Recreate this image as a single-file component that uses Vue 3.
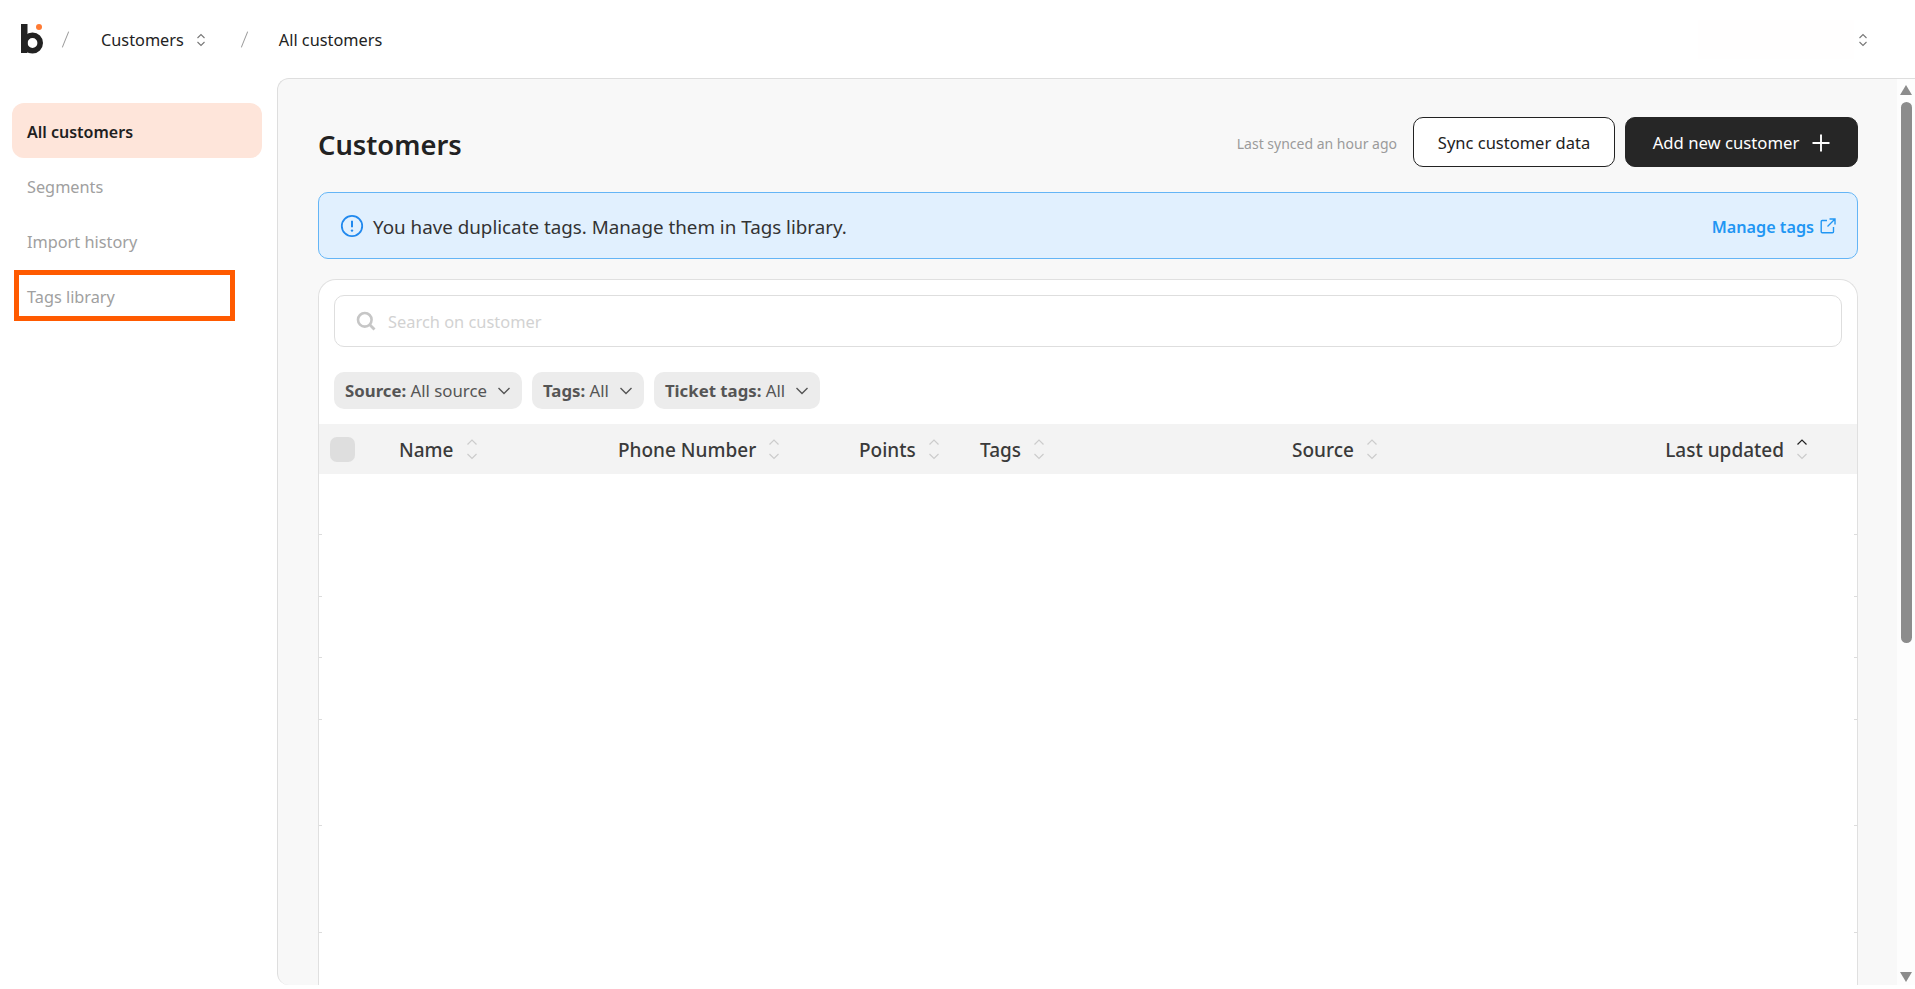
<script setup>
const navItems = [
  { label: 'All customers', active: true },
  { label: 'Segments' },
  { label: 'Import history' },
  { label: 'Tags library', marked: true },
]
const filters = [
  { key: 'Source:', value: 'All source' },
  { key: 'Tags:', value: 'All' },
  { key: 'Ticket tags:', value: 'All' },
]
const columns = [
  { label: 'Name', cls: 'c-name' },
  { label: 'Phone Number', cls: 'c-phone' },
  { label: 'Points', cls: 'c-points' },
  { label: 'Tags', cls: 'c-tags' },
  { label: 'Source', cls: 'c-source' },
  { label: 'Last updated', cls: 'c-updated', sorted: true },
]
const rowHeights = [61, 62, 61, 62, 106, 107, 80]
</script>

<template>
  <div class="app">
    <header class="topbar">
      <svg class="logo" width="24" height="32" viewBox="0 0 24 32">
        <rect x="0" y="1" width="6.5" height="29" fill="#222" />
        <circle cx="11.5" cy="20" r="7.7" fill="none" stroke="#222" stroke-width="5.6" />
        <circle cx="18" cy="4" r="3" fill="#ff7a33" />
      </svg>
      <span class="slash first"></span>
      <span class="crumb">Customers</span>
      <svg class="updown" width="10" height="14" viewBox="0 0 10 14">
        <path d="M1.5 5 5 1.5 8.5 5M1.5 9 5 12.5 8.5 9" fill="none" stroke="#777" stroke-width="1.1" />
      </svg>
      <span class="slash second"></span>
      <span class="crumb">All customers</span>
      <div class="account">
        <span class="account-box"></span>
        <svg class="updown" width="10" height="14" viewBox="0 0 10 14">
          <path d="M1.5 5 5 1.5 8.5 5M1.5 9 5 12.5 8.5 9" fill="none" stroke="#777" stroke-width="1.1" />
        </svg>
      </div>
    </header>

    <div class="body">
      <nav class="sidebar">
        <a
          v-for="item in navItems"
          :key="item.label"
          class="nav-item"
          :class="{ active: item.active }"
        >
          {{ item.label }}
          <span v-if="item.marked" class="marker"></span>
        </a>
      </nav>

      <main class="panel">
        <div class="content">
          <div class="page-head">
            <h1>Customers</h1>
            <div class="actions">
              <span class="synced">Last synced an hour ago</span>
              <button class="btn btn-light">Sync customer data</button>
              <button class="btn btn-dark">
                Add new customer
                <svg width="18" height="18" viewBox="0 0 18 18">
                  <path d="M9 0.5v17M0.5 9h17" stroke="#fff" stroke-width="1.9" fill="none" />
                </svg>
              </button>
            </div>
          </div>

          <div class="banner">
            <svg width="24" height="24" viewBox="0 0 24 24">
              <circle cx="12" cy="12" r="10.2" fill="none" stroke="#2189ee" stroke-width="1.8" />
              <path d="M12 6.8v6.4" stroke="#2189ee" stroke-width="2" fill="none" />
              <circle cx="12" cy="16.6" r="1.2" fill="#2189ee" />
            </svg>
            <span class="banner-text">You have duplicate tags. Manage them in Tags library.</span>
            <a class="manage">
              Manage tags
              <svg width="16" height="16" viewBox="0 0 16 16">
                <path d="M7 2.5H2.2a1 1 0 0 0-1 1v10.3a1 1 0 0 0 1 1h10.3a1 1 0 0 0 1-1V9M9.5 1h5.5v5.5M15 1 7.5 8.5" fill="none" stroke="#2196f3" stroke-width="1.4" />
              </svg>
            </a>
          </div>

          <section class="card">
            <div class="search">
              <svg width="20" height="20" viewBox="0 0 20 20">
                <circle cx="8.8" cy="8.8" r="6.8" fill="none" stroke="#c6c6c6" stroke-width="2.6" />
                <path d="m13.8 13.8 4.7 4.7" stroke="#c6c6c6" stroke-width="2.8" fill="none" />
              </svg>
              <span class="placeholder">Search on customer</span>
            </div>

            <div class="filters">
              <div v-for="f in filters" :key="f.key" class="chip">
                <span><b>{{ f.key }}</b> {{ f.value }}</span>
                <svg width="14" height="10" viewBox="0 0 14 10">
                  <path d="m1.5 2 5.5 5.5L12.5 2" fill="none" stroke="#555" stroke-width="1.4" />
                </svg>
              </div>
            </div>

            <div class="thead">
              <span class="check-cell"><span class="check"></span></span>
              <div v-for="col in columns" :key="col.label" class="th" :class="col.cls">
                <span class="th-label">{{ col.label }}</span>
                <svg width="12" height="24" viewBox="0 0 12 24">
                  <path d="m1.5 7.5 4.5-4.5 4.5 4.5" fill="none" :stroke="col.sorted ? '#222' : '#ccc'" stroke-width="1.2" />
                  <path d="m1.5 17 4.5 4.5 4.5-4.5" fill="none" stroke="#ccc" stroke-width="1.2" />
                </svg>
              </div>
            </div>

            <div
              v-for="(h, i) in rowHeights"
              :key="i"
              class="row"
              :style="{ height: h + 'px' }"
            >
              <i class="tick"></i>
              <i class="tick tick-right"></i>
            </div>
          </section>
        </div>

        <div class="scrollbar">
          <span class="arrow up"></span>
          <span class="thumb"></span>
          <span class="arrow down"></span>
        </div>
      </main>
    </div>
  </div>
</template>

<style>
html, body {
  margin: 0;
  overflow: hidden;
  background: #fff;
}
</style>

<style scoped>
.app {
  height: 989px;
  display: flex;
  flex-direction: column;
  font-family: "Noto Sans", "Open Sans", sans-serif;
  font-size: 16px;
  color: #222;
  background: #fff;
  overflow: hidden;
}

/* top bar */
.topbar {
  height: 78px;
  flex: none;
  display: flex;
  align-items: center;
  padding: 1px 0 0 21px;
  box-sizing: border-box;
}
.logo { flex: none; margin-top: -1px; }
.slash {
  display: block;
  width: 1px;
  height: 17px;
  background: #9a9a9a;
  transform: rotate(22deg);
}
.slash.first { margin: 0 35px 0 20px; }
.slash.second { margin: 0 34px 0 38px; }
.crumb { font-size: 16.3px; color: #222; }
.updown { flex: none; margin-left: 12px; }
.account {
  margin-left: auto;
  display: flex;
  align-items: center;
  padding-right: 47px;
}
.account-box {
  width: 156px;
  height: 39px;
  background: #fffefe;
}
.account .updown { margin-left: 4px; }

/* sidebar */
.body {
  flex: 1;
  min-height: 0;
  display: flex;
  padding-bottom: 4px;
}
.sidebar {
  width: 277px;
  flex: none;
  box-sizing: border-box;
  padding: 25px 15px 0 12px;
}
.nav-item {
  position: relative;
  display: flex;
  align-items: center;
  height: 55px;
  box-sizing: border-box;
  padding: 2px 0 0 15px;
  border-radius: 12px;
  color: #a0a0a0;
  font-size: 16.3px;
}
.nav-item.active {
  background: #fee5da;
  color: #1f1f1f;
  font-weight: 600;
  font-size: 16px;
}
.marker {
  position: absolute;
  left: 2px;
  top: 2px;
  width: 221px;
  height: 51px;
  box-sizing: border-box;
  border: 5px solid #ff5a00;
}

/* main panel */
.panel {
  flex: 1;
  min-width: 0;
  display: flex;
  background: #f8f8f8;
  border-top: 1px solid #dedede;
  border-left: 1px solid #dedede;
  border-top-left-radius: 12px;
  border-bottom-left-radius: 12px;
  overflow: hidden;
}
.content {
  flex: 1;
  min-width: 0;
  box-sizing: border-box;
  padding: 38px 39px 0 40px;
}
.page-head {
  display: flex;
  align-items: center;
  justify-content: space-between;
  height: 50px;
  margin-bottom: 25px;
}
h1 {
  margin: 4px 0 0;
  font-size: 27.3px;
  font-weight: 600;
  color: #222;
}
.actions {
  display: flex;
  align-items: center;
}
.synced {
  font-size: 14px;
  color: #9b9b9b;
  margin-right: 16px;
  padding-top: 2px;
}
.btn {
  height: 50px;
  box-sizing: border-box;
  font: inherit;
  font-size: 16.5px;
  padding: 1px 0 0;
  border-radius: 10px;
  display: flex;
  align-items: center;
  justify-content: center;
}
.btn-light {
  width: 202px;
  background: #fff;
  border: 1px solid #222;
  color: #222;
  margin-right: 10px;
}
.btn-dark {
  width: 233px;
  background: #262626;
  border: 1px solid #262626;
  color: #fff;
  font-size: 16.7px;
  gap: 13px;
}

.banner {
  height: 67px;
  box-sizing: border-box;
  display: flex;
  align-items: center;
  background: #e1f0fe;
  border: 1px solid #64b5f6;
  border-radius: 10px;
  padding: 0 21px;
  margin-bottom: 20px;
}
.banner-text {
  margin-left: 9px;
  padding-top: 2px;
  font-size: 18.8px;
  color: #333;
}
.manage {
  margin-left: auto;
  display: flex;
  align-items: center;
  gap: 6px;
  padding-top: 2px;
  color: #2196f3;
  font-weight: 600;
  font-size: 16.2px;
}
.manage svg { margin-top: -2px; }

/* card */
.card {
  background: #fff;
  border: 1px solid #e0e0e0;
  border-bottom: 0;
  border-radius: 18px 18px 0 0;
}
.search {
  margin: 15px 15px 25px;
  height: 52px;
  box-sizing: border-box;
  display: flex;
  align-items: center;
  gap: 12px;
  padding-left: 21px;
  border: 1px solid #dedede;
  border-radius: 10px;
}
.placeholder {
  color: #d2d2d2;
  font-size: 16.4px;
  padding-top: 1px;
}
.filters {
  display: flex;
  gap: 10px;
  margin: 0 15px 15px;
}
.chip {
  height: 37px;
  display: flex;
  align-items: center;
  gap: 10px;
  padding: 0 11px;
  border-radius: 10px;
  background: #ececec;
  font-size: 16.8px;
  color: #555;
}
.chip b { font-weight: 700; }

.thead {
  height: 50px;
  display: grid;
  grid-template-columns: 80px 219px 241px 121px 312px 1fr auto;
  align-items: center;
  background: #f3f3f3;
}
.check-cell { padding-left: 11px; display: flex; }
.check {
  width: 25px;
  height: 25px;
  border-radius: 7px;
  background: #dedede;
}
.th {
  display: flex;
  align-items: center;
  gap: 12px;
  font-size: 19px;
  font-weight: 500;
  color: #3a3a3a;
}
.th-label { padding-top: 2px; }
.c-updated { padding-right: 49px; }

.row {
  display: flex;
  align-items: flex-end;
  justify-content: space-between;
}
.tick {
  display: block;
  width: 3px;
  height: 1px;
  background: #dcdcdc;
}

/* scrollbar */
.scrollbar {
  width: 18px;
  flex: none;
  background: #fdfdfd;
  display: flex;
  flex-direction: column;
  align-items: center;
  padding: 6px 0 3px 0;
  box-sizing: border-box;
}
.arrow {
  width: 0;
  height: 0;
  border-left: 6px solid transparent;
  border-right: 6px solid transparent;
}
.arrow.up { border-bottom: 10px solid #8c8c8c; }
.arrow.down { border-top: 10px solid #8c8c8c; margin-top: auto; }
.thumb {
  width: 11px;
  height: 541px;
  margin-top: 7px;
  border-radius: 6px;
  background: #8c8c8c;
}
</style>
